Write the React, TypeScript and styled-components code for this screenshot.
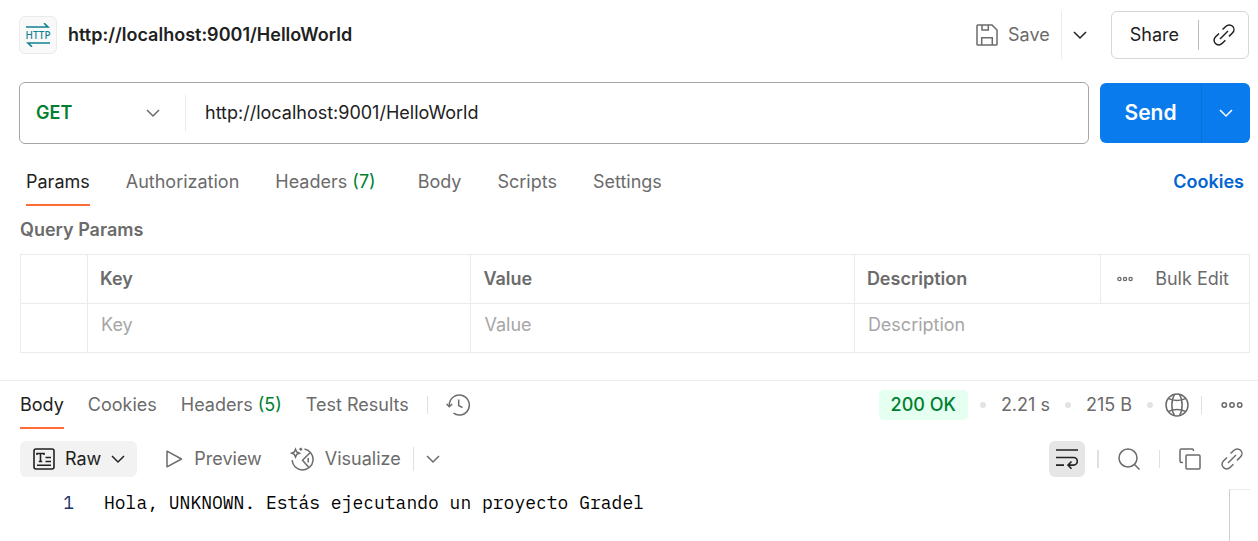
import React from "react";
import styled, { createGlobalStyle, css } from "styled-components";

const c = {
  text: "#212121",
  muted: "#6b6b6b",
  faint: "#a6a6a6",
  line: "#ebebeb",
  green: "#007f31",
  orange: "#ff6c37",
  blue: "#097bed",
  link: "#0265d2",
};

const GlobalStyle = createGlobalStyle`
  * { box-sizing: border-box; }
  body { margin: 0; background: #fff; }
  body, button, input, select, table {
    font-family: Inter, "Liberation Sans", sans-serif;
    font-size: 18px;
    line-height: 24px;
    color: ${c.text};
  }
  button { border: 0; padding: 0; background: none; cursor: pointer; white-space: nowrap; }
  svg { display: block; flex: none; }
`;

const Page = styled.div`
  min-height: 100vh;
  display: flex;
  flex-direction: column;
`;

const Header = styled.header`
  display: flex;
  align-items: center;
  padding: 11px 9px 0 19px;
  margin-bottom: 23px;
`;

const ProtocolBadge = styled.div`
  width: 38px;
  height: 38px;
  margin-right: 11px;
  border: 1px solid ${c.line};
  border-radius: 6px;
  background: #f9f9f9;
  display: flex;
  flex-direction: column;
  align-items: center;
  justify-content: center;
  color: #0e8290;
`;

const ProtocolName = styled.span`
  font: 500 10px/14px "Noto Sans", sans-serif;
`;

const Title = styled.h1`
  margin: 0;
  flex: 1;
  font-size: 18px;
  font-weight: 600;
  line-height: 24px;
`;

const SaveButton = styled.button`
  height: 48px;
  display: flex;
  align-items: center;
  gap: 10px;
  padding-right: 11px;
  color: ${c.muted};
`;

const SaveMenu = styled.button`
  height: 48px;
  padding: 0 24px 0 11px;
  border-left: 1px solid ${c.line};
`;

const ShareGroup = styled.div`
  height: 48px;
  display: flex;
  align-items: center;
  border: 1px solid #d6d6d6;
  border-radius: 6px;
`;

const ShareButton = styled.button`
  height: 30px;
  padding: 0 19px 0 18px;
  border-right: 1px solid #bdbdbd;
`;

const CopyLink = styled.button`
  padding: 0 13px 0 14px;
`;

const RequestBar = styled.form`
  display: flex;
  align-items: center;
  gap: 11px;
  padding: 0 8px 0 19px;
`;

const UrlBox = styled.div`
  flex: 1;
  height: 62px;
  display: flex;
  align-items: center;
  border: 1px solid #a6a6a6;
  border-radius: 6px;
`;

const MethodField = styled.label`
  width: 166px;
  height: 36px;
  display: flex;
  align-items: center;
  justify-content: space-between;
  padding: 0 25px 0 16px;
  border-right: 1px solid ${c.line};
  color: ${c.muted};
`;

const MethodSelect = styled.select`
  appearance: none;
  flex: 1;
  border: 0;
  padding: 0;
  background: none;
  font-weight: 600;
  color: ${c.green};
  outline: none;
`;

const UrlInput = styled.input`
  flex: 1;
  min-width: 0;
  border: 0;
  padding: 0 19px;
  outline: none;
`;

const SendGroup = styled.div`
  width: 150px;
  height: 60px;
  display: flex;
  border-radius: 6px;
  background: ${c.blue};
  overflow: hidden;
`;

const SendButton = styled.button`
  flex: 1;
  font-size: 21px;
  font-weight: 600;
  color: #fff;
`;

const SendMenu = styled.button`
  width: 49px;
  display: grid;
  place-items: center;
  border-left: 1px solid #0a6fd6;
  color: #fff;
`;

const Tabs = styled.nav<{ $gap: number }>`
  display: flex;
  gap: ${(p) => p.$gap}px;
`;

const Tab = styled.button<{ $active?: boolean; $indicator?: boolean }>`
  height: 48px;
  padding-right: ${(p) => (p.$indicator ? 6 : 0)}px;
  color: ${c.muted};
  ${(p) =>
    p.$active &&
    css`
      color: ${c.text};
      box-shadow: inset 0 -2px ${c.orange};
    `}
`;

const Count = styled.span`
  color: ${c.green};
`;

const RequestTabs = styled.div`
  display: flex;
  align-items: center;
  justify-content: space-between;
  padding: 14px 14px 0 26px;
`;

const CookiesLink = styled.a`
  font-weight: 600;
  color: ${c.link};
  text-decoration: none;
`;

const Params = styled.section`
  padding: 12px 8px 27px 20px;
`;

const SectionTitle = styled.h2`
  margin: 0 0 12px;
  font-size: 18px;
  font-weight: 600;
  line-height: 24px;
  color: ${c.muted};
`;

const ParamTable = styled.table`
  width: 100%;
  table-layout: fixed;
  border-collapse: collapse;
  color: ${c.muted};

  th, td {
    height: 49px;
    padding: 0 12px;
    border: 1px solid ${c.line};
    text-align: left;
    font-weight: 600;
  }
  td { padding: 0 13px 6px; }
`;

const NarrowCol = styled.col`
  width: 67px;
`;

const WideCol = styled.col`
  width: 31.2%;
`;

const ActionsCol = styled.col`
  width: 149px;
`;

const TableActions = styled.div`
  display: flex;
  align-items: center;
  justify-content: space-between;
  padding: 0 8px 0 4px;
`;

const TextButton = styled.button`
  color: ${c.muted};
  font-weight: 400;
`;

const CellInput = styled.input`
  display: block;
  width: 100%;
  border: 0;
  padding: 0;
  outline: none;
  &::placeholder { color: ${c.faint}; }
`;

const Response = styled.section`
  flex: 1;
  display: flex;
  flex-direction: column;
  border-top: 1px solid ${c.line};
`;

const Bar = styled.div`
  display: flex;
  align-items: center;
  justify-content: space-between;
  padding: 0 15px 0 20px;
  color: ${c.muted};
`;

const Group = styled.div<{ $gap?: number }>`
  display: flex;
  align-items: center;
  gap: ${(p) => p.$gap ?? 0}px;
`;

const Rule = styled.span<{ $height?: number; $width?: number }>`
  width: ${(p) => p.$width ?? 1}px;
  height: ${(p) => p.$height ?? 18}px;
  background: #e0e0e0;
`;

const StatusPill = styled.span`
  height: 30px;
  padding: 3px 12px;
  border-radius: 5px;
  background: #e5fff1;
  color: ${c.green};
  font-weight: 500;
`;

const Stat = styled.span`
  padding: 0 3px;
`;

const Dot = styled.span`
  width: 6px;
  height: 6px;
  border-radius: 50%;
  background: #e3e3e3;
`;

const IconButton = styled.button`
  color: ${c.muted};
`;

const Toolbar = styled(Bar)`
  margin: 12px 0;
`;

const FormatButton = styled.button`
  height: 36px;
  display: flex;
  align-items: center;
  gap: 10px;
  padding: 0 12px 0 13px;
  border-radius: 6px;
  background: #f2f2f2;
`;

const ViewButton = styled.button`
  display: flex;
  align-items: center;
  gap: 11px;
  color: ${c.muted};
`;

const WrapToggle = styled.button`
  width: 36px;
  height: 36px;
  display: grid;
  place-items: center;
  border-radius: 6px;
  background: #e6e6e6;
`;

const Editor = styled.div`
  flex: 1;
  display: flex;
  padding-right: 8px;
`;

const CodeLines = styled.pre`
  flex: 1;
  margin: 0;
  display: grid;
  grid-template-columns: 74px 1fr;
  column-gap: 30px;
  align-content: start;
  font: 18px/28px "IBM Plex Mono", "Liberation Mono", monospace;
  color: #000;
`;

const Code = styled.code`
  font: inherit;
`;

const LineNumber = styled.span`
  text-align: right;
  color: #1f3468;
`;

const ScrollGutter = styled.div`
  width: 21px;
  border-top: 1px solid ${c.line};
  border-left: 1px solid #d0d0d0;
`;

type IconProps = { w?: number; h?: number; box?: string; sw?: number; children: React.ReactNode };

const Icon = ({ w = 24, h = w, box = `0 0 ${w} ${h}`, sw = 1.5, children }: IconProps) => (
  <svg width={w} height={h} viewBox={box} fill="none" stroke="currentColor" strokeWidth={sw} aria-hidden="true">
    {children}
  </svg>
);

const Chevron = () => (
  <Icon w={14} h={14}>
    <path d="M1 4l6 6 6-6" />
  </Icon>
);

const LinkIcon = () => (
  <Icon w={22}>
    <path d="M7 15L15 7" />
    <path d="M9.5 5.500L13 2.300a4.600 4.600 0 0 1 6.600 6.500L16 12.400M12.400 16.200L9 19.500A4.600 4.600 0 0 1 2.400 13L6 9.500" />
  </Icon>
);

const MoreIcon = ({ w }: { w: number }) => (
  <Icon w={w} h={8} box="0 0 22 8" sw={w > 18 ? 1.5 : 1.8}>
    <circle cx="3.3" cy="4" r="2.2" />
    <circle cx="11" cy="4" r="2.2" />
    <circle cx="18.7" cy="4" r="2.2" />
  </Icon>
);

const SaveIcon = () => (
  <Icon w={22}>
    <path d="M1 1.800a.8.8 0 0 1 .8-.8H16l5 5v14.200a.8.8 0 0 1-.8.8H1.800a.8.8 0 0 1-.8-.8z" />
    <path d="M6 1v5h6.300V1M5.700 21v-7.300h10.600V21" />
  </Icon>
);

const TextIcon = () => (
  <Icon w={22} sw={1.6}>
    <rect x="1" y="1" width="20" height="20" rx="2" />
    <path d="M4 7V5.500h7V7M7.500 5.500v8M5.800 13.500h3.400M12.500 9.500H18M12.500 13.500H18M4 17.200h14" />
  </Icon>
);

const VisualizeIcon = () => (
  <Icon w={24}>
    <path d="M14.500 2.100a10.500 10.500 0 1 1-12.400 11" />
    <path d="M5.500 2.200l1.200 2.800 2.800 1.200-2.800 1.200-1.200 2.800-1.200-2.800-2.800-1.200 2.800-1.200zM10.800 .8v3M9.300 2.300h3" />
    <path d="M20.300 5.500l-7.800 7.700 6.400 7.400M18.200 11v4.500" />
  </Icon>
);

const HistoryIcon = () => (
  <Icon w={24}>
    <path d="M3.300 13.500V12A10 10 0 1 1 7.500 20.200" />
    <path d="M.6 11l2.700 2.800L6.200 11M12.700 6.500v6l3.800 2.200" />
  </Icon>
);

const GlobeIcon = () => (
  <Icon w={24}>
    <circle cx="12" cy="12" r="11" />
    <path d="M9.500 1.300C6 7 6 17 9.500 22.700M14.500 1.300c3.500 5.700 3.500 15.700 0 21.400M3.200 5.400c5 2.700 12.600 2.700 17.600 0M3.200 18.600c5-2.700 12.600-2.700 17.600 0" />
  </Icon>
);

const WrapIcon = () => (
  <Icon w={22} sw={1.6}>
    <path d="M0 2h22M0 9.500h17.500a3.800 3.800 0 0 1 0 7.600h-5M0 17.100h8M15.500 13.500L12 17.100l3.500 3.600" />
  </Icon>
);

const HttpArrow = ({ flip }: { flip?: boolean }) => (
  <Icon w={24} h={5} sw={1.6}>
    {flip ? <path d="M24 1H2L6 4.800" /> : <path d="M0 4h22L18 .2" />}
  </Icon>
);

export default function App() {
  return (
    <Page>
      <GlobalStyle />
      <Header>
        <ProtocolBadge>
          <HttpArrow />
          <ProtocolName>HTTP</ProtocolName>
          <HttpArrow flip />
        </ProtocolBadge>
        <Title>http://localhost:9001/HelloWorld</Title>
        <SaveButton>
          <SaveIcon />
          Save
        </SaveButton>
        <SaveMenu aria-label="Save options">
          <Chevron />
        </SaveMenu>
        <ShareGroup>
          <ShareButton>Share</ShareButton>
          <CopyLink aria-label="Copy link">
            <LinkIcon />
          </CopyLink>
        </ShareGroup>
      </Header>

      <RequestBar onSubmit={(e) => e.preventDefault()}>
        <UrlBox>
          <MethodField>
            <MethodSelect aria-label="Method" defaultValue="GET">
              <option>GET</option>
            </MethodSelect>
            <Chevron />
          </MethodField>
          <UrlInput aria-label="Request URL" defaultValue="http://localhost:9001/HelloWorld" />
        </UrlBox>
        <SendGroup>
          <SendButton type="submit">Send</SendButton>
          <SendMenu type="button" aria-label="Send options">
            <Chevron />
          </SendMenu>
        </SendGroup>
      </RequestBar>

      <RequestTabs>
        <Tabs $gap={36}>
          <Tab $active>Params</Tab>
          <Tab>Authorization</Tab>
          <Tab $indicator>
            Headers <Count>(7)</Count>
          </Tab>
          <Tab>Body</Tab>
          <Tab>Scripts</Tab>
          <Tab>Settings</Tab>
        </Tabs>
        <CookiesLink href="#cookies">Cookies</CookiesLink>
      </RequestTabs>

      <Params>
        <SectionTitle>Query Params</SectionTitle>
        <ParamTable>
          <colgroup>
            <NarrowCol />
            <WideCol />
            <WideCol />
            <col />
            <ActionsCol />
          </colgroup>
          <thead>
            <tr>
              <th />
              <th>Key</th>
              <th>Value</th>
              <th>Description</th>
              <th>
                <TableActions>
                  <IconButton aria-label="More columns">
                    <MoreIcon w={16} />
                  </IconButton>
                  <TextButton>Bulk Edit</TextButton>
                </TableActions>
              </th>
            </tr>
          </thead>
          <tbody>
            <tr>
              <td />
              <td>
                <CellInput aria-label="Key" placeholder="Key" />
              </td>
              <td>
                <CellInput aria-label="Value" placeholder="Value" />
              </td>
              <td colSpan={2}>
                <CellInput aria-label="Description" placeholder="Description" />
              </td>
            </tr>
          </tbody>
        </ParamTable>
      </Params>

      <Response>
        <Bar>
          <Group $gap={18}>
            <Tabs $gap={24}>
              <Tab $active>Body</Tab>
              <Tab>Cookies</Tab>
              <Tab>
                Headers <Count>(5)</Count>
              </Tab>
              <Tab>Test Results</Tab>
            </Tabs>
            <Rule />
            <IconButton aria-label="History">
              <HistoryIcon />
            </IconButton>
          </Group>
          <Group $gap={12}>
            <StatusPill>200 OK</StatusPill>
            <Dot />
            <Stat>2.21 s</Stat>
            <Dot />
            <Stat>215 B</Stat>
            <Dot />
            <IconButton aria-label="Network">
              <GlobeIcon />
            </IconButton>
            <Group $gap={19}>
              <Rule />
              <IconButton aria-label="More actions">
                <MoreIcon w={22} />
              </IconButton>
            </Group>
          </Group>
        </Bar>

        <Toolbar>
          <Group $gap={28}>
            <FormatButton>
              <TextIcon />
              Raw
              <Chevron />
            </FormatButton>
            <ViewButton>
              <Icon w={18} h={18}>
                <path d="M2 1.200v15.600L16.500 9z" strokeLinejoin="round" />
              </Icon>
              Preview
            </ViewButton>
            <Group $gap={12}>
              <ViewButton>
                <VisualizeIcon />
                Visualize
              </ViewButton>
              <Rule $height={24} />
              <IconButton aria-label="Visualize options">
                <Chevron />
              </IconButton>
            </Group>
          </Group>
          <Group $gap={19}>
            <Group $gap={12}>
              <WrapToggle aria-label="Wrap lines">
                <WrapIcon />
              </WrapToggle>
              <Rule $width={2} />
            </Group>
            <IconButton aria-label="Search">
              <Icon w={22}>
                <circle cx="10" cy="10" r="9" />
                <path d="M16.500 16.500l5 5" />
              </Icon>
            </IconButton>
            <Rule />
            <Group $gap={20}>
              <IconButton aria-label="Copy response">
                <Icon w={22}>
                  <rect x="7" y="7" width="14" height="14" rx="1" />
                  <path d="M4 14.500H2.500A1.500 1.500 0 0 1 1 13V2.500A1.500 1.500 0 0 1 2.500 1H13a1.500 1.500 0 0 1 1.500 1.500V3" />
                </Icon>
              </IconButton>
              <IconButton aria-label="Copy link to response">
                <LinkIcon />
              </IconButton>
            </Group>
          </Group>
        </Toolbar>

        <Editor>
          <CodeLines>
            <LineNumber>1</LineNumber>
            <Code>Hola, UNKNOWN. Estás ejecutando un proyecto Gradel</Code>
          </CodeLines>
          <ScrollGutter />
        </Editor>
      </Response>
    </Page>
  );
}
